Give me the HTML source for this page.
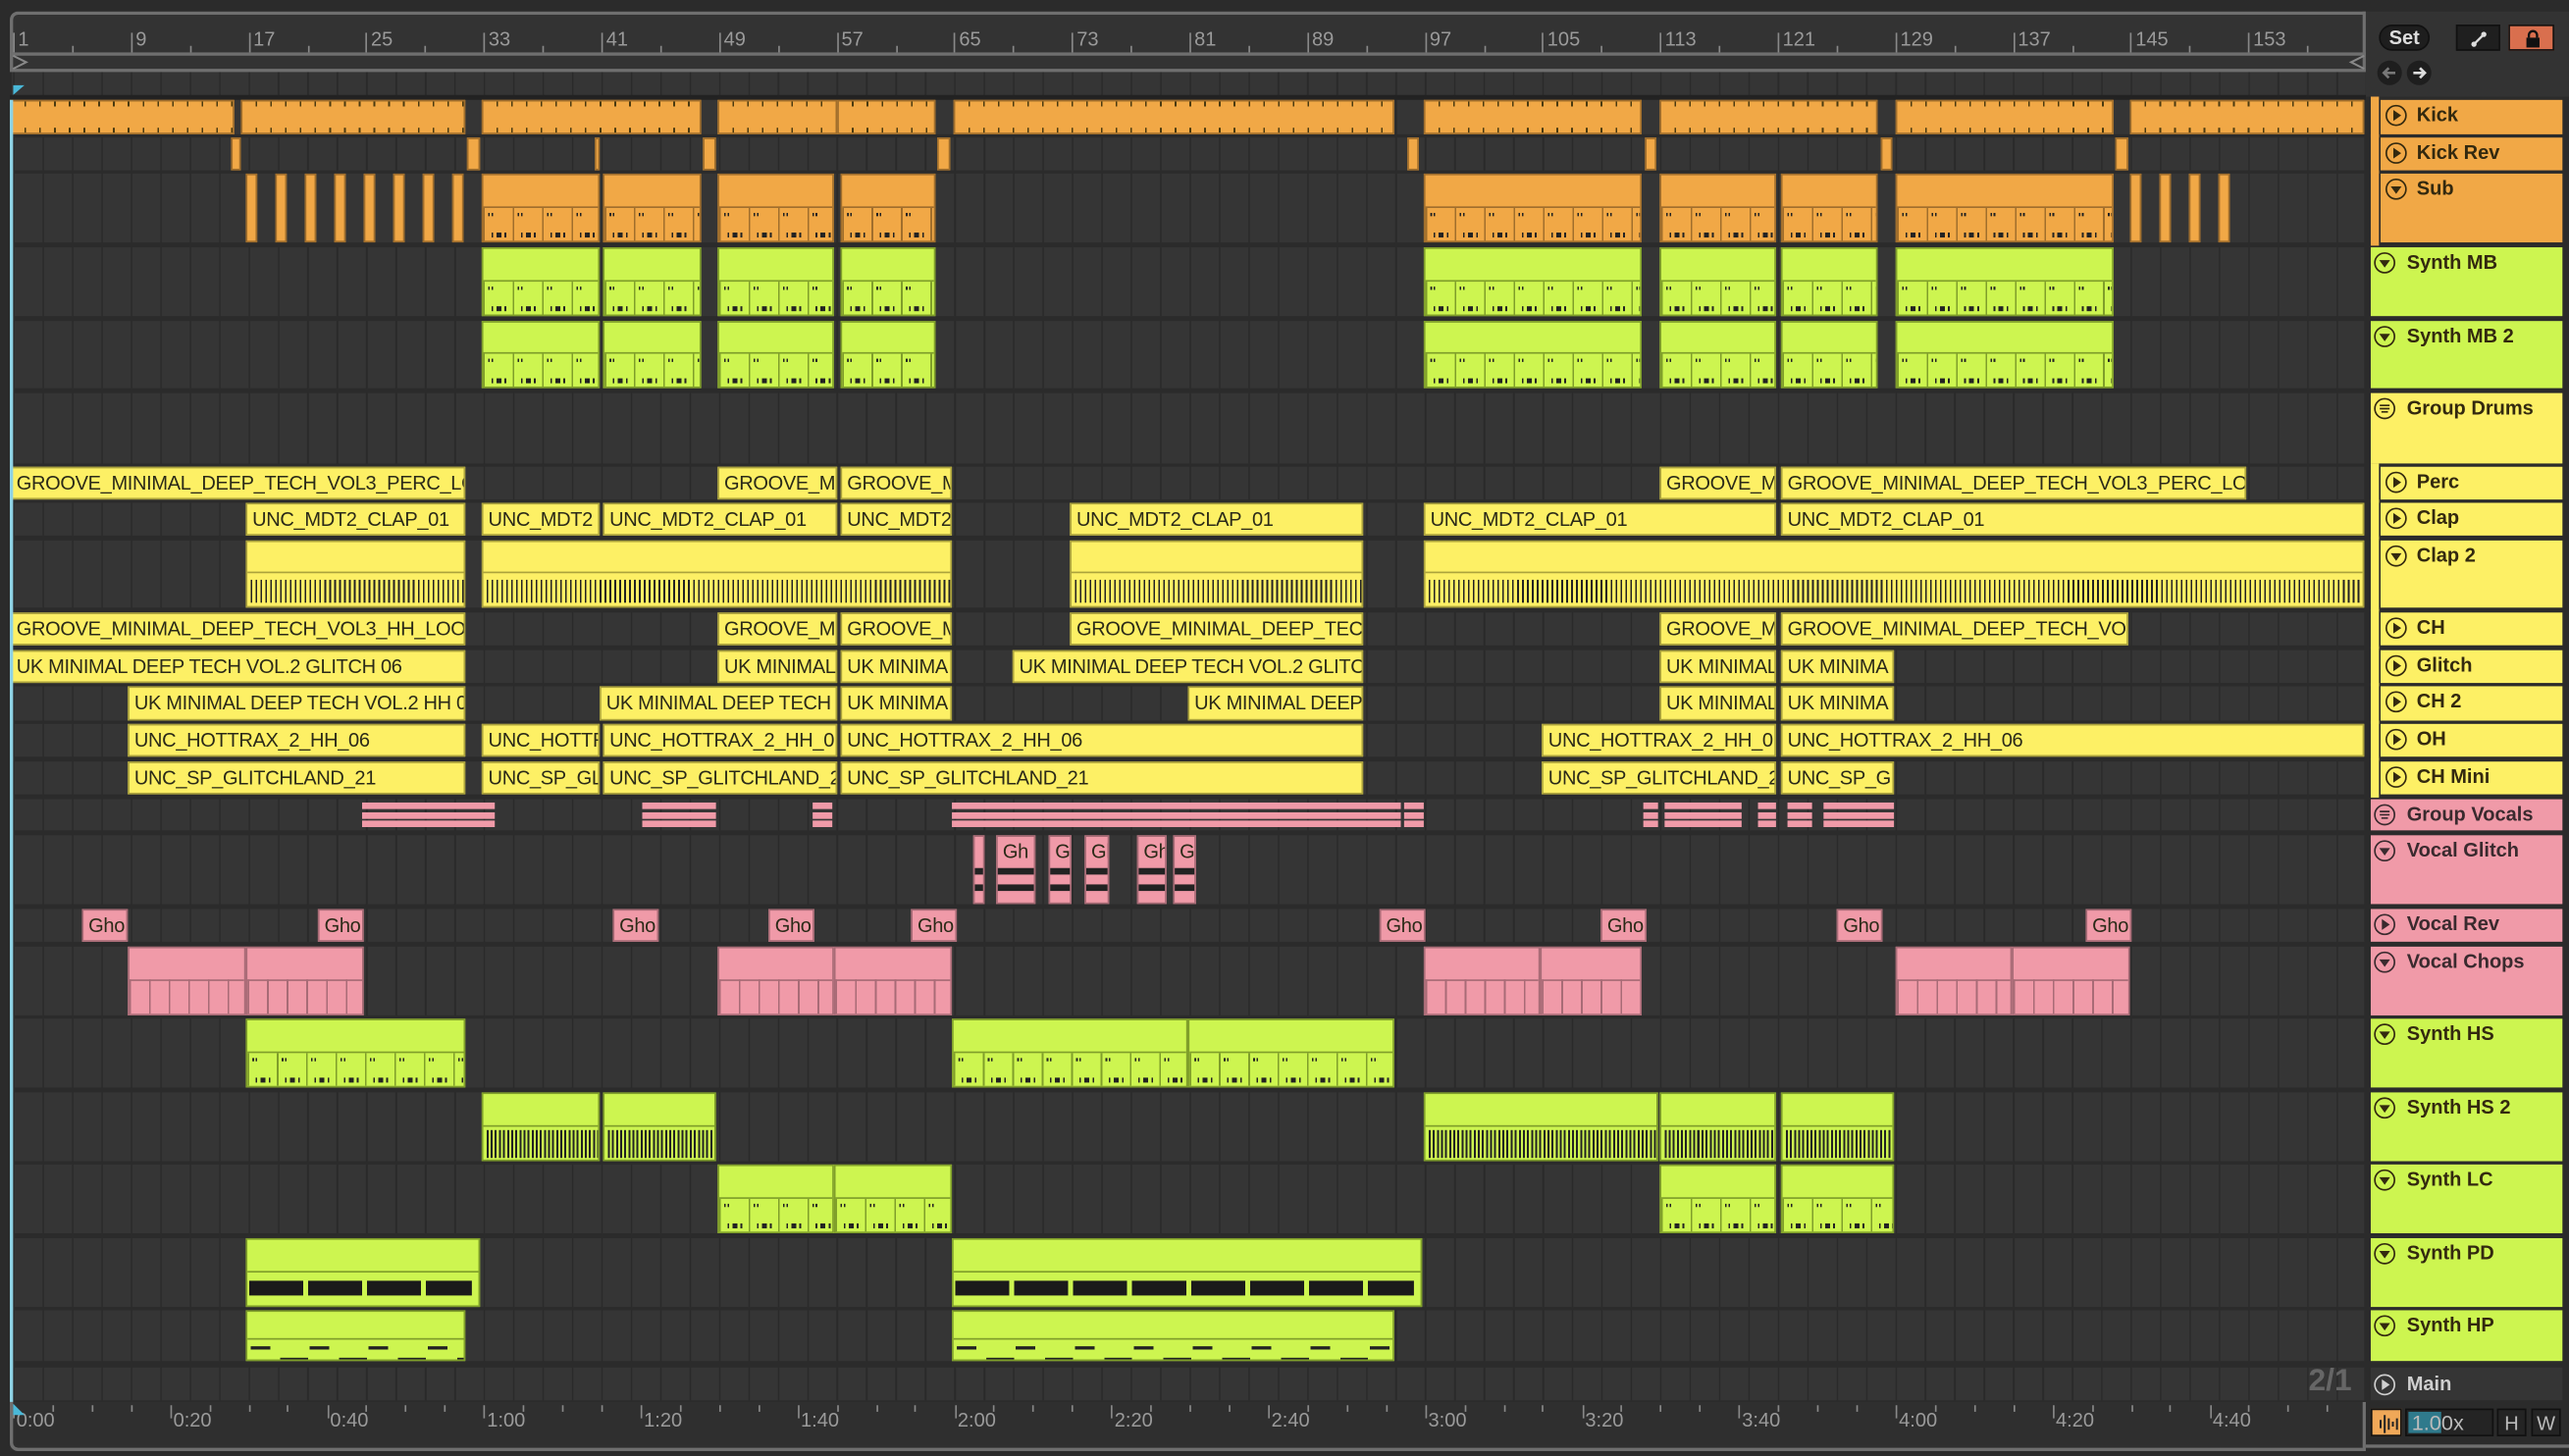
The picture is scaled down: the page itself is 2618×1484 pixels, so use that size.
<!DOCTYPE html>
<html><head><meta charset="utf-8">
<style>
html,body{margin:0;padding:0;background:#2a2a2a;overflow:hidden;width:2618px;height:1484px}
#s{position:absolute;left:0;top:0;width:1568px;height:889px;transform:scale(1.66964,1.66929);transform-origin:0 0;background:#2b2b2b;font-family:"Liberation Sans",sans-serif}
.a{position:absolute;box-sizing:border-box}
.lane{position:absolute;left:6px;width:1437px;background:repeating-linear-gradient(90deg,#2a2a2a 0 1px,#353535 1px 17.95px);background-position:2px 0}
.clip{position:absolute;box-sizing:border-box;overflow:hidden;white-space:nowrap}
.nm{font-family:"Liberation Sans Narrow","Liberation Sans",sans-serif;font-size:12px;color:#2b2a18;padding-left:3px;line-height:19px;letter-spacing:-0.2px}
.hd{position:absolute;left:1447px;width:117px;box-sizing:border-box;font-weight:bold;font-size:12px;color:#33280f}
.ic{position:absolute;left:5px;top:3px;width:13px;height:13px;border:1.3px solid #4a3a18;border-radius:50%;box-sizing:border-box}
.ht{position:absolute;left:22px;top:3px}
.rl{position:absolute;font-size:12px;color:#9a9a9a}
</style></head><body>
<div id="s">
<div class="a" style="left:6px;top:7px;width:1438px;height:36px;border:2px solid #6f6f6f;border-bottom:none;border-radius:5px 0 0 0;background:#333"></div>
<div class="a" style="left:6px;top:32px;width:1438px;height:2px;background:#6f6f6f"></div>
<div class="a" style="left:6px;top:42px;width:1438px;height:2px;background:#6f6f6f"></div>
<div class="a" style="left:6px;top:44px;width:1438px;height:14px;background:repeating-linear-gradient(90deg,#2a2a2a 0 1px,#353535 1px 17.95px);background-position:2px 0"></div>
<div class="a" style="left:6px;top:58px;width:1438px;height:3px;background:#222"></div>
<svg class="a" style="left:7px;top:33px" width="12" height="10"><path d="M1 1 L9 5 L1 9" fill="none" stroke="#888" stroke-width="1.2"/></svg>
<svg class="a" style="left:1433px;top:33px" width="12" height="10"><path d="M10 1 L2 5 L10 9" fill="none" stroke="#888" stroke-width="1.2"/></svg>
<div class="a" style="left:1444px;top:7px;width:124px;height:52px;background:#333"></div>
<div class="a" style="left:1452px;top:15px;width:31px;height:16px;border-radius:8px;background:#1e1e1e;border:1px solid #111;color:#ddd;font-size:12px;font-weight:bold;text-align:center;line-height:15px">Set</div>
<div class="a" style="left:1499px;top:15px;width:27px;height:16px;background:#1f1f1f;border:1px solid #111"><svg width="27" height="16"><path d="M10 11 L16 5" stroke="#ddd" stroke-width="1.4"/><circle cx="10" cy="11" r="1.6" fill="#ddd"/><circle cx="16" cy="5" r="1.6" fill="#ddd"/></svg></div>
<div class="a" style="left:1531px;top:15px;width:28px;height:16px;background:#d96f4e;border:1px solid #111"><svg width="28" height="16"><rect x="10" y="7" width="8" height="6" fill="#111"/><path d="M11.5 7 V5.5 A2.5 2.5 0 0 1 16.5 5.5 V7" fill="none" stroke="#111" stroke-width="1.4"/></svg></div>
<div class="a" style="left:1451px;top:37px;width:15px;height:15px;border-radius:50%;background:#1e1e1e"><svg width="15" height="15"><path d="M11 7.5 H4 M7 4.5 L4 7.5 L7 10.5" fill="none" stroke="#777" stroke-width="1.6"/></svg></div>
<div class="a" style="left:1469px;top:37px;width:15px;height:15px;border-radius:50%;background:#1e1e1e"><svg width="15" height="15"><path d="M4 7.5 H11 M8 4.5 L11 7.5 L8 10.5" fill="none" stroke="#ddd" stroke-width="1.6"/></svg></div>
<div class="a" style="left:6px;top:856px;width:1438px;height:30px;background:#2f2f2f"></div>
<div class="a" style="left:6px;top:856px;width:1438px;height:30px;border:2px solid #6f6f6f;border-top:none;border-radius:0 0 0 5px"></div>
<div class="a" style="left:1444px;top:882px;width:124px;height:2px;background:#6f6f6f"></div>
<div class="a" style="left:1409px;top:833px;font-size:19px;font-weight:bold;color:#666;z-index:5">2/1</div>
<div class="a" style="left:1447px;top:860px;width:19px;height:17px;background:#f0a858;border:1px solid #111"><svg width="19" height="17"><path d="M5 6 V11 M7.5 3 V14 M10 5 V12 M12.5 7 V10 M15 5 V12" stroke="#222" stroke-width="1.2"/></svg></div>
<div class="a" style="left:1468px;top:860px;width:54px;height:17px;background:#242424;border:1px solid #111"><div class="a" style="left:1px;top:1px;width:20px;height:13px;background:#2f7a8c"></div><div class="a" style="left:3px;top:0;font-size:13px;color:#bbb;line-height:16px">1.00x</div></div>
<div class="a" style="left:1524px;top:860px;width:18px;height:17px;background:#242424;border:1px solid #111;color:#bbb;font-size:12px;text-align:center;line-height:16px">H</div>
<div class="a" style="left:1545px;top:860px;width:18px;height:17px;background:#242424;border:1px solid #111;color:#bbb;font-size:12px;text-align:center;line-height:16px">W</div>
</div>
<script>
const S=document.getElementById('s');
function el(html){S.insertAdjacentHTML('beforeend',html);}
const X=b=>8+(b-1)*8.975;
for(let b=1;b<=153;b+=8){const x=X(b);el(`<div class="a" style="left:${x}px;top:20px;width:1px;height:12px;background:#888"></div><div class="rl" style="left:${x+3}px;top:17px">${b}</div>`);el(`<div class="a" style="left:${x+36}px;top:28px;width:1px;height:4px;background:#888"></div>`);}
const tl=["0:00","0:20","0:40","1:00","1:20","1:40","2:00","2:20","2:40","3:00","3:20","3:40","4:00","4:20","4:40"];
tl.forEach((t,i)=>{const x=8+i*95.75;el(`<div class="a" style="left:${x}px;top:858px;width:1px;height:8px;background:#888"></div><div class="rl" style="left:${x+2}px;top:860px">${t}</div>`);for(let k=1;k<4;k++)el(`<div class="a" style="left:${x+k*23.9}px;top:858px;width:1px;height:4px;background:#888"></div>`);});
const C={o:['#f1a846','#a06e2c'],l:['#cdf550','#7f9e2a'],y:['#fdf065','#aba23c'],p:['#f09aa8','#a86b76']};
const T=[
['Kick',61,21,'o','p',1],['Kick Rev',84,20,'o','p',1],['Sub',106,42,'o','d',1],
['Synth MB',151,42,'l','d',0],['Synth MB 2',196,41,'l','d',0],['Group Drums',240,43,'y','g',0],
['Perc',285,20,'y','p',1],['Clap',307,20,'y','p',1],['Clap 2',330,41,'y','d',1],['CH',374,20,'y','p',1],['Glitch',397,20,'y','p',1],['CH 2',419,21,'y','p',1],['OH',442,20,'y','p',1],['CH Mini',465,20,'y','p',1],
['Group Vocals',488,19,'p','g',0],['Vocal Glitch',510,42,'p','d',0],['Vocal Rev',555,20,'p','p',0],['Vocal Chops',578,42,'p','d',0],
['Synth HS',622,42,'l','d',0],['Synth HS 2',667,42,'l','d',0],['Synth LC',711,42,'l','d',0],['Synth PD',756,42,'l','d',0],['Synth HP',800,31,'l','d',0],['Main',835,20,'m','p',0]];
T.forEach(t=>{
 const [n,y,h,c,ic,ch]=t;
 el(`<div class="lane" style="top:${y}px;height:${h}px"></div>`);
 let bg=c=='m'?'#353535':C[c][0];let tc=c=='m'?'#cfcfcf':(c=='p'?'#3a2a2e':'#33290f');let bc=tc;
 let left=ch?1453:1447;
 if(ch)el(`<div class="a" style="left:1447px;top:${y-2}px;width:5px;height:${h+4}px;background:${bg}"></div>`);
 let icon='';
 if(ic=='p')icon=`<svg width="11" height="11" style="position:absolute;left:0;top:0"><path d="M3.8 2.2 L8.6 5.5 L3.8 8.8Z" fill="${bc}"/></svg>`;
 else if(ic=='d')icon=`<svg width="11" height="11" style="position:absolute;left:0;top:0"><path d="M2.2 3.8 L8.8 3.8 L5.5 8.4Z" fill="${bc}"/></svg>`;
 else icon=`<svg width="11" height="11" style="position:absolute;left:0;top:0"><path d="M2.5 3.5 H8.5 M2.5 5.5 H8.5 M3.5 7.5 H7.5" stroke="${bc}" stroke-width="1"/></svg>`;
 el(`<div class="hd" style="left:${left}px;width:${1564-left}px;top:${y}px;height:${h}px;background:${bg};color:${tc}"><div class="ic" style="border-color:${bc};left:${ch?3:2}px;top:${n=='Main'?4:3}px">${icon}</div><div class="ht" style="left:22px;top:${n=='Main'?3:2}px">${n}</div></div>`);
});
function clip(c,x1,x2,y,h,name,style){
 const [f,b]=C[c];
 let inner='';
 if(name)inner+=`<div class="nm" style="line-height:${Math.min(h,19)}px">${name}</div>`;
 if(style=='tall'){inner+=`<div class="a" style="left:0;right:0;top:${h*0.45}px;height:1px;background:${b}"></div><div class="a" style="left:0;right:0;top:${h*0.45+1}px;bottom:0;background:repeating-linear-gradient(90deg,${b} 0 1px,transparent 1px 17.95px)"></div><div class="a" style="left:3px;right:0;top:${h*0.45+4}px;height:2px;background:repeating-linear-gradient(90deg,#222 0 1px,transparent 1px 2px,#222 2px 3px,transparent 3px 17.95px)"></div><div class="a" style="left:5px;right:0;bottom:2px;height:3px;background:repeating-linear-gradient(90deg,#222 0 1px,transparent 1px 3px,#222 3px 6px,transparent 6px 8px,#222 8px 9px,transparent 9px 17.95px)"></div>`;}
 if(style=='hatch'){inner+=`<div class="a" style="left:0;right:0;top:${h*0.45}px;height:1px;background:${b}"></div><div class="a" style="left:2px;right:0;top:${h*0.45+5}px;height:${h*0.33}px;background:repeating-linear-gradient(90deg,#222 0 1px,transparent 1px 3px)"></div>`;}
 if(style=='hs'){inner+=`<div class="a" style="left:0;right:0;top:${h*0.45}px;height:1px;background:${b}"></div><div class="a" style="left:2px;right:0;top:${h*0.52}px;height:${h*0.4}px;background:repeating-linear-gradient(90deg,#222 0 1.2px,transparent 1.2px 2.5px)"></div>`;}
 if(style=='pd'){inner+=`<div class="a" style="left:0;right:0;top:${h*0.45}px;height:1px;background:${b}"></div><div class="a" style="left:1px;right:4px;top:${h*0.6}px;height:${h*0.22}px;background:repeating-linear-gradient(90deg,#1a1a1a 0 33px,transparent 33px 36px)"></div>`;}
 if(style=='hp'){inner+=`<div class="a" style="left:0;right:0;top:${h*0.5}px;height:1px;background:${b}"></div><div class="a" style="left:2px;right:0;top:${h*0.68}px;height:1.5px;background:repeating-linear-gradient(90deg,#222 0 12px,transparent 12px 36px)"></div><div class="a" style="left:20px;right:0;top:${h*0.9}px;height:1.5px;background:repeating-linear-gradient(90deg,#222 0 17px,transparent 17px 36px)"></div>`;}
 if(style=='pk'){inner+=`<div class="a" style="left:0;right:0;top:${h*0.45}px;height:1px;background:${b}"></div><div class="a" style="left:0;right:0;top:${h*0.45}px;bottom:0;background:repeating-linear-gradient(90deg,${b} 0 1px,transparent 1px 12px)"></div>`;}
 if(style=='tick'){inner+=`<div class="a" style="left:0;right:0;top:0;height:3px;background:repeating-linear-gradient(90deg,transparent 0 8px,#4a3a10 8px 9px)"></div><div class="a" style="left:0;right:0;bottom:0;height:3px;background:repeating-linear-gradient(90deg,transparent 0 8px,#4a3a10 8px 9px)"></div>`;}
 el(`<div class="clip" style="left:${x1}px;top:${y}px;width:${x2-x1}px;height:${h}px;background:${f};border:1px solid ${b}">${inner}</div>`);
}
[[6,143],[147,284],[294,428],[438,511],[511,571],[582,851],[869,1002],[1013,1146],[1157,1290],[1300,1443]].forEach(a=>clip('o',a[0],a[1],61,21,'','tick'));
[[141,147],[285,293],[363,366],[429,437],[572,580],[859,866],[1004,1011],[1148,1155],[1291,1299]].forEach(a=>{clip('o',a[0],a[1],84,20,'','');});
[150,168,186,204,222,240,258,276].forEach(x=>clip('o',x,x+7,106,42,'',''));
[1300,1318,1336,1354].forEach(x=>clip('o',x,x+7,106,42,'',''));
const mb=[[294,366],[368,428],[438,509],[513,571],[869,1002],[1013,1084],[1087,1146],[1157,1290]];
mb.forEach(a=>clip('o',a[0],a[1],106,42,'','tall'));
mb.forEach(a=>clip('l',a[0],a[1],151,42,'','tall'));
mb.forEach(a=>clip('l',a[0],a[1],196,41,'','tall'));
const Y=(y,h,arr,st)=>arr.forEach(a=>clip('y',a[0],a[1],y,h,a[2]||'',st||''));
Y(285,20,[[6,284,'GROOVE_MINIMAL_DEEP_TECH_VOL3_PERC_LO'],[438,511,'GROOVE_M'],[513,581,'GROOVE_M'],[1013,1084,'GROOVE_M'],[1087,1371,'GROOVE_MINIMAL_DEEP_TECH_VOL3_PERC_LO']]);
Y(307,20,[[150,284,'UNC_MDT2_CLAP_01'],[294,366,'UNC_MDT2'],[368,511,'UNC_MDT2_CLAP_01'],[513,581,'UNC_MDT2'],[653,832,'UNC_MDT2_CLAP_01'],[869,1084,'UNC_MDT2_CLAP_01'],[1087,1443,'UNC_MDT2_CLAP_01']]);
Y(330,41,[[150,284],[294,581],[653,832],[869,1443]],'hatch');
Y(374,20,[[6,284,'GROOVE_MINIMAL_DEEP_TECH_VOL3_HH_LOO'],[438,511,'GROOVE_M'],[513,581,'GROOVE_M'],[653,832,'GROOVE_MINIMAL_DEEP_TEC'],[1013,1084,'GROOVE_M'],[1087,1299,'GROOVE_MINIMAL_DEEP_TECH_VOI']]);
Y(397,20,[[6,284,'UK MINIMAL DEEP TECH VOL.2 GLITCH 06'],[438,511,'UK MINIMAL'],[513,581,'UK MINIMA'],[618,832,'UK MINIMAL DEEP TECH VOL.2 GLITC'],[1013,1084,'UK MINIMAL'],[1087,1156,'UK MINIMA']]);
Y(419,21,[[78,284,'UK MINIMAL DEEP TECH VOL.2 HH 0'],[366,511,'UK MINIMAL DEEP TECH'],[513,581,'UK MINIMA'],[725,832,'UK MINIMAL DEEP'],[1013,1084,'UK MINIMAL'],[1087,1156,'UK MINIMA']]);
Y(442,20,[[78,284,'UNC_HOTTRAX_2_HH_06'],[294,366,'UNC_HOTTR'],[368,511,'UNC_HOTTRAX_2_HH_0'],[513,832,'UNC_HOTTRAX_2_HH_06'],[941,1084,'UNC_HOTTRAX_2_HH_0'],[1087,1443,'UNC_HOTTRAX_2_HH_06']]);
Y(465,20,[[78,284,'UNC_SP_GLITCHLAND_21'],[294,366,'UNC_SP_GL'],[368,511,'UNC_SP_GLITCHLAND_2'],[513,832,'UNC_SP_GLITCHLAND_21'],[941,1084,'UNC_SP_GLITCHLAND_2'],[1087,1156,'UNC_SP_GL']]);
[[221,302],[392,437],[496,508],[581,855],[857,869],[1003,1012],[1016,1063],[1073,1084],[1091,1106],[1113,1156]].forEach(a=>{for(let k=0;k<3;k++)el(`<div class="a" style="left:${a[0]}px;top:${490+k*5.5}px;width:${a[1]-a[0]}px;height:4px;background:#f09aa8"></div>`);});
[[594,601,''],[608,632,'Gh'],[640,654,'G'],[662,677,'Gl'],[694,712,'Gh'],[716,730,'Gl']].forEach(a=>{clip('p',a[0],a[1],510,42,a[2],'');el(`<div class="a" style="left:${a[0]+1}px;top:530px;width:${a[1]-a[0]-2}px;height:4px;background:#222"></div><div class="a" style="left:${a[0]+1}px;top:540px;width:${a[1]-a[0]-2}px;height:4px;background:#222"></div>`);});
[50,194,374,469,556,842,977,1121,1273].forEach(x=>clip('p',x,x+28,555,20,'Gho',''));
[[78,150],[150,222],[438,509],[509,581],[869,940],[940,1002],[1157,1228],[1228,1300]].forEach(a=>clip('p',a[0],a[1],578,42,'','pk'));
[[150,284],[581,725],[725,851]].forEach(a=>clip('l',a[0],a[1],622,42,'','tall'));
[[294,366],[368,437],[869,1012],[1013,1084],[1087,1156]].forEach(a=>clip('l',a[0],a[1],667,42,'','hs'));
[[438,509],[509,581],[1013,1084],[1087,1156]].forEach(a=>clip('l',a[0],a[1],711,42,'','tall'));
[[150,293],[581,868]].forEach(a=>clip('l',a[0],a[1],756,42,'','pd'));
[[150,284],[581,851]].forEach(a=>clip('l',a[0],a[1],800,31,'','hp'));
el(`<div class="a" style="left:6px;top:61px;width:2px;height:795px;background:#8fd3e6"></div>`);
el(`<svg class="a" style="left:8px;top:52px" width="8" height="6"><path d="M0 0 L7 0 L0 6Z" fill="#4ab8d8"/></svg>`);
el(`<svg class="a" style="left:8px;top:857px" width="8" height="8"><path d="M0 0 L0 7 L7 7Z" fill="#4ab8d8"/></svg>`);
</script>
</body></html>
